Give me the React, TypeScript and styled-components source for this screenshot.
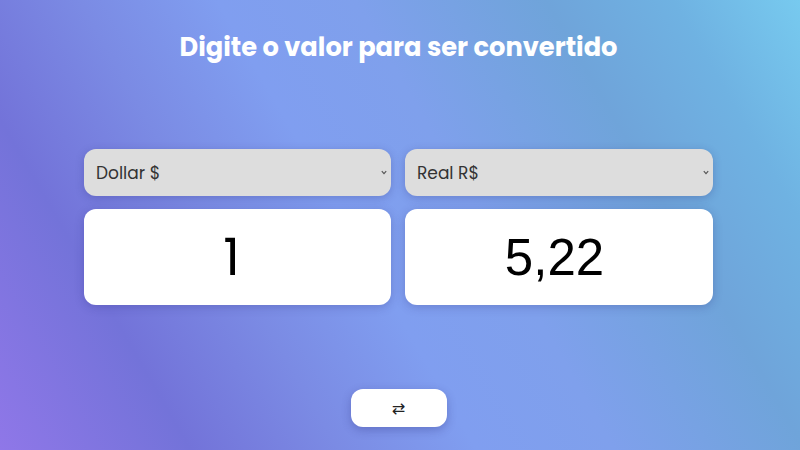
import React, { useState } from "react";
import styled, { createGlobalStyle } from "styled-components";

const Global = createGlobalStyle`
  html, body { margin: 0; padding: 0; }
  body {
    width: 800px;
    height: 450px;
    overflow: hidden;
    font-family: Poppins, "Open Sans", "Noto Sans", sans-serif;
  }
`;

const Page = styled.main`
  box-sizing: border-box;
  width: 800px;
  height: 450px;
  padding: 28px 3px 0 0;
  display: flex;
  flex-direction: column;
  align-items: center;
  background: linear-gradient(
    60deg,
    #8f77e8 0%,
    #7373d9 18%,
    #7b8be4 32%,
    #809ef0 45%,
    #7fa0ec 58%,
    #6fa4da 76%,
    #6fb2e2 88%,
    #77caef 100%
  );
`;

const Title = styled.h1`
  margin: 0;
  color: #ffffff;
  font-family: Poppins, "Open Sans", sans-serif;
  font-weight: 700;
  font-size: 25.7px;
  line-height: 38px;
`;

const Converter = styled.section`
  margin-top: 83px;
  width: 629px;
  display: grid;
  grid-template-columns: 307px 308px;
  column-gap: 14px;
`;

const Column = styled.div`
  display: flex;
  flex-direction: column;
  gap: 13px;
`;

const SelectWrap = styled.div`
  position: relative;
  height: 47px;
`;

const Select = styled.select`
  box-sizing: border-box;
  appearance: none;
  -webkit-appearance: none;
  height: 47px;
  width: 100%;
  padding: 0 12px;
  border: none;
  border-radius: 12px;
  background: #dddddd;
  color: #333333;
  font-family: Poppins, "Open Sans", sans-serif;
  font-size: 17px;
  box-shadow: 0 2px 8px rgba(40, 40, 120, 0.25);
  outline: none;
`;

const Chevron = styled.svg`
  position: absolute;
  right: 4px;
  top: 21px;
  width: 6px;
  height: 5px;
  pointer-events: none;
`;

const ValueBox = styled.input<{ $arial?: boolean }>`
  box-sizing: border-box;
  height: 96px;
  width: 100%;
  border: none;
  border-radius: 12px;
  background: #ffffff;
  color: #000000;
  text-align: center;
  padding: ${(p) => (p.$arial ? "0 9px 0 0" : "0 12px 0 0")};
  font-family: ${(p) => (p.$arial ? '"Liberation Sans", Arial, sans-serif' : 'Poppins, "Open Sans", sans-serif')};
  font-weight: 400;
  font-size: ${(p) => (p.$arial ? "51px" : "52px")};
  box-shadow: 0 2px 10px rgba(40, 40, 120, 0.25);
  outline: none;
`;

const SwapButton = styled.button`
  margin-top: 84px;
  width: 96px;
  height: 38px;
  border: none;
  border-radius: 12px;
  background: #ffffff;
  color: #222222;
  font-size: 16px;
  font-family: "DejaVu Sans", sans-serif;
  box-shadow: 0 3px 10px rgba(40, 40, 120, 0.3);
  cursor: pointer;
`;

function CurrencySelect({ value }: { value: string }) {
  return (
    <SelectWrap>
      <Select defaultValue={value}>
        <option value="USD">Dollar $</option>
        <option value="BRL">Real R$</option>
      </Select>
      <Chevron viewBox="0 0 6 5">
        <path d="M0.8 1.2 L3 3.6 L5.2 1.2" fill="none" stroke="#555" strokeWidth="1.2" />
      </Chevron>
    </SelectWrap>
  );
}

export default function App() {
  const [from, setFrom] = useState("1");
  return (
    <>
      <Global />
      <Page>
        <Title>Digite o valor para ser convertido</Title>
        <Converter>
          <Column>
            <CurrencySelect value="USD" />
            <ValueBox value={from} onChange={(e) => setFrom(e.target.value)} />
          </Column>
          <Column>
            <CurrencySelect value="BRL" />
            <ValueBox $arial readOnly value="5,22" />
          </Column>
        </Converter>
        <SwapButton>⇄</SwapButton>
      </Page>
    </>
  );
}
